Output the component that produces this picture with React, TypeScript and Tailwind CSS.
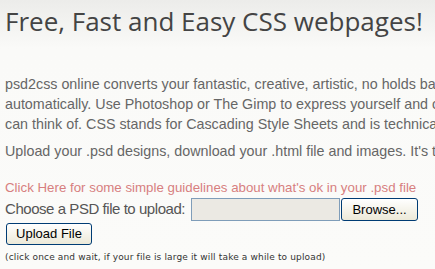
export default function App() {
  return (
    <div className="h-[269px] w-[435px] overflow-hidden bg-gradient-to-b from-[#ececea] via-[#fafaf8] via-[18%] to-[#fbfbf9] text-[#5a5a5a]">
      <h1 className="whitespace-nowrap pl-[5px] pt-[5px] font-['Open_Sans',sans-serif] text-[26px] leading-[32px] text-[#444444]">
        Free, Fast and Easy CSS webpages!
      </h1>

      <div className="mt-[37px] w-[700px] pl-[5px] font-['Liberation_Sans',Arial,sans-serif] text-[14.3px] leading-[20px] text-[#666666]">
        <p>
          <span className="block whitespace-nowrap">
            psd2css online converts your fantastic, creative, artistic, no holds barred Photoshop designs into CSS webpages
          </span>
          <span className="block whitespace-nowrap">
            automatically. Use Photoshop or The Gimp to express yourself and create a website with any design you
          </span>
          <span className="block whitespace-nowrap">
            can think of. CSS stands for Cascading Style Sheets and is technically the best way to build webpages.
          </span>
        </p>
        <p className="mt-[7px] whitespace-nowrap">
          Upload your .psd designs, download your .html file and images. It's that easy!
        </p>
      </div>

      <div className="mt-[18px] w-[600px] pl-[5px] font-['Liberation_Sans',Arial,sans-serif]">
        <a href="#" className="block whitespace-nowrap text-[13.3px] leading-[18px] text-[#d77f7f]">
          Click Here for some simple guidelines about what's ok in your .psd file
        </a>
        <div className="mt-[1px] flex items-center whitespace-nowrap">
          <span className="shrink-0 text-[15px] tracking-[-0.45px] text-[#555555]">Choose a PSD file to upload:</span>
          <div className="ml-[6px] h-[23px] w-[149px] shrink-0 border border-[#7f9db9] bg-[#ebe9e3]" />
          <button className="ml-[1px] h-[23px] w-[77px] shrink-0 rounded-[3px] border border-[#003c74] bg-gradient-to-b from-white to-[#ece9d8] font-['Liberation_Sans',Arial,sans-serif] text-[13px] text-black">
            Browse...
          </button>
        </div>
        <button className="mt-[2px] ml-[1px] block h-[22px] w-[86px] rounded-[3px] border border-[#003c74] bg-gradient-to-b from-white to-[#ece9d8] text-[13px] text-black">
          Upload File
        </button>
        <p className="mt-[6px] whitespace-nowrap font-['DejaVu_Sans',sans-serif] text-[9px] tracking-[0.15px] text-[#333333]">
          (click once and wait, if your file is large it will take a while to upload)
        </p>
      </div>
    </div>
  );
}
